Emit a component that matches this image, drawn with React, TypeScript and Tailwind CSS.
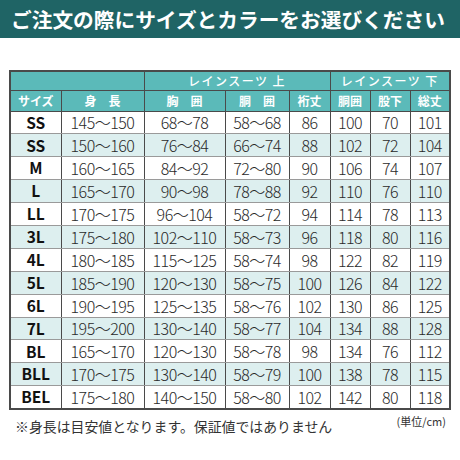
import React from "react";

const rows: string[][] = [
  ["SS", "145～150", "68～78", "58～68", "86", "100", "70", "101"],
  ["SS", "150～160", "76～84", "66～74", "88", "102", "72", "104"],
  ["M", "160～165", "84～92", "72～80", "90", "106", "74", "107"],
  ["L", "165～170", "90～98", "78～88", "92", "110", "76", "110"],
  ["LL", "170～175", "96～104", "58～72", "94", "114", "78", "113"],
  ["3L", "175～180", "102～110", "58～73", "96", "118", "80", "116"],
  ["4L", "180～185", "115～125", "58～74", "98", "122", "82", "119"],
  ["5L", "185～190", "120～130", "58～75", "100", "126", "84", "122"],
  ["6L", "190～195", "125～135", "58～76", "102", "130", "86", "125"],
  ["7L", "195～200", "130～140", "58～77", "104", "134", "88", "128"],
  ["BL", "165～170", "120～130", "58～78", "98", "134", "76", "112"],
  ["BLL", "170～175", "130～140", "58～79", "100", "138", "78", "115"],
  ["BEL", "175～180", "140～150", "58～80", "102", "142", "80", "118"],
];

const widths = [51, 83, 81, 64, 41, 40, 40, 40];

export default function App() {
  const font = { fontFamily: '"Noto Sans CJK JP", "Noto Sans", sans-serif' };
  return (
    <div className="w-[460px] h-[460px] bg-white overflow-hidden" style={font}>
      <div className="h-[38px] bg-[#1f6465] flex items-center pl-[11px]">
        <span className="text-white font-bold text-[20.7px] leading-none tracking-[0px] whitespace-nowrap">
          ご注文の際にサイズとカラーをお選びください
        </span>
      </div>
      <div className="mt-[32px] ml-[9px] w-[440px]">
        <table className="table-fixed border-collapse w-[440px] border-2 border-[#4a4a4a]">
          <colgroup>
            {widths.map((w, i) => (
              <col key={i} style={{ width: w }} />
            ))}
          </colgroup>
          <thead>
            <tr className="h-[19px] bg-[#5bbab9]">
              <th colSpan={2} className="border border-[#4a4a4a] p-0"></th>
              <th
                colSpan={3}
                className="border border-[#4a4a4a] p-0 text-white font-medium text-[12px] leading-none tracking-[1.5px]"
              >
                レインスーツ 上
              </th>
              <th
                colSpan={3}
                className="border border-[#4a4a4a] p-0 text-white font-medium text-[12px] leading-none tracking-[1.5px]"
              >
                レインスーツ 下
              </th>
            </tr>
            <tr className="h-[21px] bg-[#5bbab9]">
              {["サイズ", "身　長", "胸　囲", "胴　囲", "裄丈", "胴囲", "股下", "総丈"].map((t, i) => (
                <th
                  key={i}
                  className="border border-[#4a4a4a] p-0 text-white font-bold text-[12px] leading-none whitespace-nowrap"
                >
                  {t}
                </th>
              ))}
            </tr>
          </thead>
          <tbody>
            {rows.map((r, ri) => (
              <tr key={ri} className={ri % 2 === 1 ? "h-[22.9px] bg-[#ddefef]" : "h-[22.9px] bg-white"}>
                {r.map((c, ci) => (
                  <td
                    key={ci}
                    className={
                      ci === 0
                        ? "border-x border-x-[#4a4a4a] border-y border-y-[#9a9a9a] p-0 text-center text-[#111] font-bold text-[15.5px] leading-none"
                        : "border-x border-x-[#4a4a4a] border-y border-y-[#9a9a9a] p-0 text-center text-[#2a2a2a] font-light text-[16px] leading-none tracking-[-0.5px] whitespace-nowrap"
                    }
                  >
                    {c}
                  </td>
                ))}
              </tr>
            ))}
          </tbody>
        </table>
        <div className="flex justify-between items-start mt-[6px]">
          <span className="ml-[6px] mt-[4px] text-[13.9px] leading-none text-[#333] whitespace-nowrap">
            ※身長は目安値となります。保証値ではありません
          </span>
          <span className="mr-[3px] text-[11px] leading-none text-[#333] whitespace-nowrap">(単位/cm)</span>
        </div>
      </div>
    </div>
  );
}
